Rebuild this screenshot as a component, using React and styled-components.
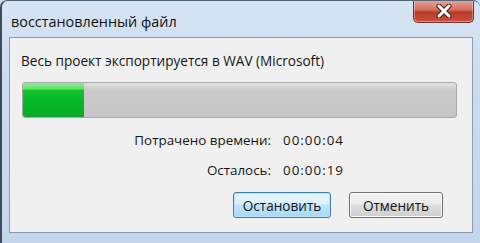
import React from "react";
import styled, { createGlobalStyle } from "styled-components";

const GlobalStyle = createGlobalStyle`
  html, body {
    margin: 0;
    padding: 0;
    background: #cfdcea;
  }
`;

const Window = styled.div`
  box-sizing: border-box;
  width: 480px;
  height: 243px;
  display: flex;
  flex-direction: column;
  border-left: 2px solid #3d4c5c;
  border-top: 1px solid #56677a;
  border-radius: 7px 7px 0 0;
  background: linear-gradient(180deg, #d6e4f3 0%, #c9dbee 40%, #c3d6eb 100%);
  font-family: "Open Sans", "DejaVu Sans", sans-serif;
  color: #151515;
  overflow: hidden;
`;

const TitleBar = styled.div`
  height: 36px;
  display: flex;
  align-items: flex-start;
  justify-content: space-between;
`;

const Title = styled.span`
  padding: 11px 0 0 9px;
  font-size: 14.4px;
  color: #111;
`;

const CloseButton = styled.div`
  box-sizing: border-box;
  width: 61px;
  height: 23px;
  margin-right: 6px;
  margin-top: -1px;
  display: flex;
  align-items: center;
  justify-content: center;
  border: 1px solid #6b3434;
  border-top: none;
  border-radius: 0 0 5px 5px;
  background: linear-gradient(180deg, #e9a99c 0%, #d46c5c 45%, #b83a28 55%, #c9503c 100%);
  box-shadow: inset 0 0 0 1px rgba(255, 255, 255, 0.35);
`;

const Client = styled.div`
  box-sizing: border-box;
  height: 196px;
  margin: 0 7px 0 7px;
  border: 1px solid #8d9db0;
  background: #f0f0f0;
  padding: 15px 13px 0 11px;
  display: flex;
  flex-direction: column;
`;

const Message = styled.div`
  font-size: 13.6px;
  line-height: 16px;
`;

const Progress = styled.div`
  box-sizing: border-box;
  width: 435px;
  height: 36px;
  margin: 13px 0 0 1px;
  border: 1px solid #a9a9a9;
  border-radius: 3px;
  background: linear-gradient(180deg, #e2e2e2 0%, #cbcbcb 20%, #c6c6c6 100%);
  overflow: hidden;
`;

const Fill = styled.div`
  height: 100%;
  border-radius: 2px 0 0 2px;
  background: linear-gradient(180deg, #8ef09a 0%, #5fdd6c 18%, #14c22c 22%, #06b625 60%, #0ca72a 100%);
`;

const Stats = styled.div`
  display: grid;
  grid-template-columns: 250px auto;
  column-gap: 12px;
  row-gap: 14px;
  margin-top: 14px;
  font-size: 13.4px;
  line-height: 16px;
`;

const Label = styled.span`
  text-align: right;
`;

const Time = styled.span`
  letter-spacing: 1px;
`;

const Buttons = styled.div`
  display: flex;
  justify-content: flex-end;
  gap: 18px;
  margin-top: 14px;
  padding-right: 16px;
`;

const Button = styled.div`
  box-sizing: border-box;
  width: ${(p) => p.$w}px;
  height: 26px;
  display: flex;
  align-items: center;
  justify-content: center;
  font-size: 13.6px;
  border-radius: 3px;
  border: 1px solid ${(p) => (p.$primary ? "#3c7fb1" : "#707070")};
  background: ${(p) =>
    p.$primary
      ? "linear-gradient(180deg, #eaf6fd 0%, #d9f0fc 45%, #bee6fd 50%, #a7d9f5 100%)"
      : "linear-gradient(180deg, #f2f2f2 0%, #ebebeb 45%, #dddddd 50%, #cfcfcf 100%)"};
  box-shadow: inset 0 0 0 1px ${(p) => (p.$primary ? "#b9e3f7" : "#fcfcfc")};
`;

export default function App() {
  const progress = 14;
  return (
    <>
      <GlobalStyle />
      <Window>
        <TitleBar>
          <Title>восстановленный файл</Title>
          <CloseButton>
            <svg width="16" height="14" viewBox="0 0 16 14">
              <path
                d="M3 2 L13 12 M13 2 L3 12"
                stroke="#4a1e1a"
                strokeWidth="5"
                strokeLinecap="round"
              />
              <path
                d="M3 2 L13 12 M13 2 L3 12"
                stroke="#ffffff"
                strokeWidth="3"
                strokeLinecap="round"
              />
            </svg>
          </CloseButton>
        </TitleBar>
        <Client>
          <Message>Весь проект экспортируется в WAV (Microsoft)</Message>
          <Progress>
            <Fill style={{ width: `${progress}%` }} />
          </Progress>
          <Stats>
            <Label>Потрачено времени:</Label>
            <Time>00:00:04</Time>
            <Label>Осталось:</Label>
            <Time>00:00:19</Time>
          </Stats>
          <Buttons>
            <Button $primary $w={98}>Остановить</Button>
            <Button $w={94}>Отменить</Button>
          </Buttons>
        </Client>
      </Window>
    </>
  );
}
